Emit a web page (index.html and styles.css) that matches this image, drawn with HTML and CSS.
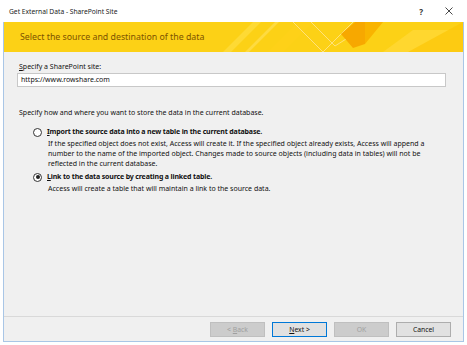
FILE: index.html
```html
<!DOCTYPE html>
<html lang="en">
<head>
  <meta charset="UTF-8" />
  <title>Get External Data - SharePoint Site</title>
  <link rel="stylesheet" href="styles.css">
</head>
<body>
  <div class="window">
    <div class="titlebar">
      <span class="title">Get External Data - SharePoint Site</span>
      <span class="tb-buttons">
        <span class="tb-help">?</span>
        <svg class="tb-close" width="8" height="8" viewBox="0 0 8 8">
          <path d="M0.5 0.5 L7.5 7.5 M7.5 0.5 L0.5 7.5" stroke="#333" stroke-width="0.9" fill="none"/>
        </svg>
      </span>
    </div>

    <div class="frame">
      <div class="banner">
        <h1>Select the source and destination of the data</h1>
        <svg class="banner-art" width="240" height="30" viewBox="0 0 240 30">
          <polygon points="0,30 30,0 38,0 8,30" fill="#ffe04a" opacity="0.6"/>
          <polygon points="22,30 52,0 56,0 26,30" fill="#ffe66a" opacity="0.5"/>
          <polygon points="45,30 75,0 90,0 60,30" fill="#ffd21a" opacity="0.7"/>
          <polyline points="70,0 100,30 130,0" fill="none" stroke="#ffe27a" stroke-width="1"/>
          <polyline points="88,0 112,24 150,0" fill="none" stroke="#ffe27a" stroke-width="1"/>
          <polygon points="118,12 132,0 142,0 142,22 130,26" fill="#f7a800"/>
          <polygon points="142,0 160,0 142,22" fill="#f9b400"/>
          <polygon points="160,30 190,8 240,8 240,30" fill="#ffd836" opacity="0.8"/>
          <polygon points="185,30 240,0 240,30" fill="#fbc300" opacity="0.6"/>
        </svg>
      </div>

      <div class="content">
        <label class="field-label"><u>S</u>pecify a SharePoint site:</label>
        <div class="textbox">https://www.rowshare.com</div>

        <p class="intro">Specify how and where you want to store the data in the current database.</p>

        <div class="option">
          <div class="option-head">
            <span class="radio"></span>
            <span class="option-title"><u>I</u>mport the source data into a new table in the current database.</span>
          </div>
          <p class="option-desc">If the specified object does not exist, Access will create it. If the specified object already exists, Access will append a<br>number to the name of the imported object. Changes made to source objects (including data in tables) will not be<br>reflected in the current database.</p>
        </div>

        <div class="option">
          <div class="option-head">
            <span class="radio checked"></span>
            <span class="option-title"><u>L</u>ink to the data source by creating a linked table.</span>
          </div>
          <p class="option-desc">Access will create a table that will maintain a link to the source data.</p>
        </div>
      </div>

      <div class="footer">
        <button class="btn" disabled>&lt; <u>B</u>ack</button>
        <button class="btn default"><u>N</u>ext &gt;</button>
        <button class="btn" disabled>OK</button>
        <button class="btn">Cancel</button>
      </div>
    </div>
  </div>
</body>
</html>
```

FILE: styles.css
```css
* {
  box-sizing: border-box;
}

body {
  margin: 0;
  background: #fff;
  font-family: 'Noto Sans', sans-serif;
  color: #111;
}

.window {
  width: 467px;
  height: 345px;
  display: flex;
  flex-direction: column;
}

.titlebar {
  height: 22px;
  flex: none;
  display: flex;
  align-items: center;
  justify-content: space-between;
  padding: 0 14px 0 9px;
  font-size: 6.7px;
  color: #222;
}

.tb-buttons {
  display: flex;
  align-items: center;
  gap: 22px;
}

.tb-help {
  font-size: 8px;
  font-weight: bold;
  color: #333;
}

.frame {
  margin: 0 3px;
  height: 320px;
  flex: none;
  border: 1px solid #a9c6e6;
  border-top: none;
  background: #f0f0f0;
  display: flex;
  flex-direction: column;
}

.banner {
  height: 30px;
  flex: none;
  background: #fcd116;
  display: flex;
  align-items: center;
  justify-content: space-between;
  overflow: hidden;
}

.banner h1 {
  margin: 0 0 0 16px;
  font-size: 8.8px;
  font-weight: normal;
  color: #7d5300;
  white-space: nowrap;
}

.banner-art {
  flex: none;
}

.content {
  flex: 1;
  padding: 10px 17px 0 13px;
  font-size: 7px;
  line-height: 10px;
}

.field-label {
  display: block;
  padding-left: 2px;
}

.textbox {
  margin-top: 1px;
  height: 14px;
  line-height: 12px;
  padding: 0 3px;
  background: #fff;
  border: 1px solid #c8c8c8;
}

.intro {
  margin: 21px 0 0 2px;
}

.option {
  margin: 9px 0 0 16px;
}

.option + .option {
  margin-top: 3px;
}

.option-head {
  display: flex;
  align-items: center;
  gap: 5px;
}

.radio {
  width: 9px;
  height: 9px;
  border: 1px solid #333;
  border-radius: 50%;
  background: #fff;
  display: flex;
  align-items: center;
  justify-content: center;
}

.radio.checked::after {
  content: "";
  width: 4px;
  height: 4px;
  border-radius: 50%;
  background: #222;
}

.option-title {
  font-weight: bold;
  letter-spacing: -0.15px;
}

.option-desc {
  margin: 2px 0 0 15px;
}

.footer {
  height: 25px;
  flex: none;
  border-top: 1px solid #d9d9d9;
  display: flex;
  justify-content: flex-end;
  align-items: flex-start;
  gap: 7px;
  padding: 5px 12px 0 0;
}

.btn {
  width: 55px;
  height: 15px;
  padding: 0;
  font-family: 'Noto Sans', sans-serif;
  font-size: 6.8px;
  color: #111;
  background: #e1e1e1;
  border: 1px solid #adadad;
}

.btn:disabled {
  background: #cccccc;
  border-color: #bfbfbf;
  color: #a0a0a0;
}

.btn.default {
  border-color: #0078d7;
}
```
